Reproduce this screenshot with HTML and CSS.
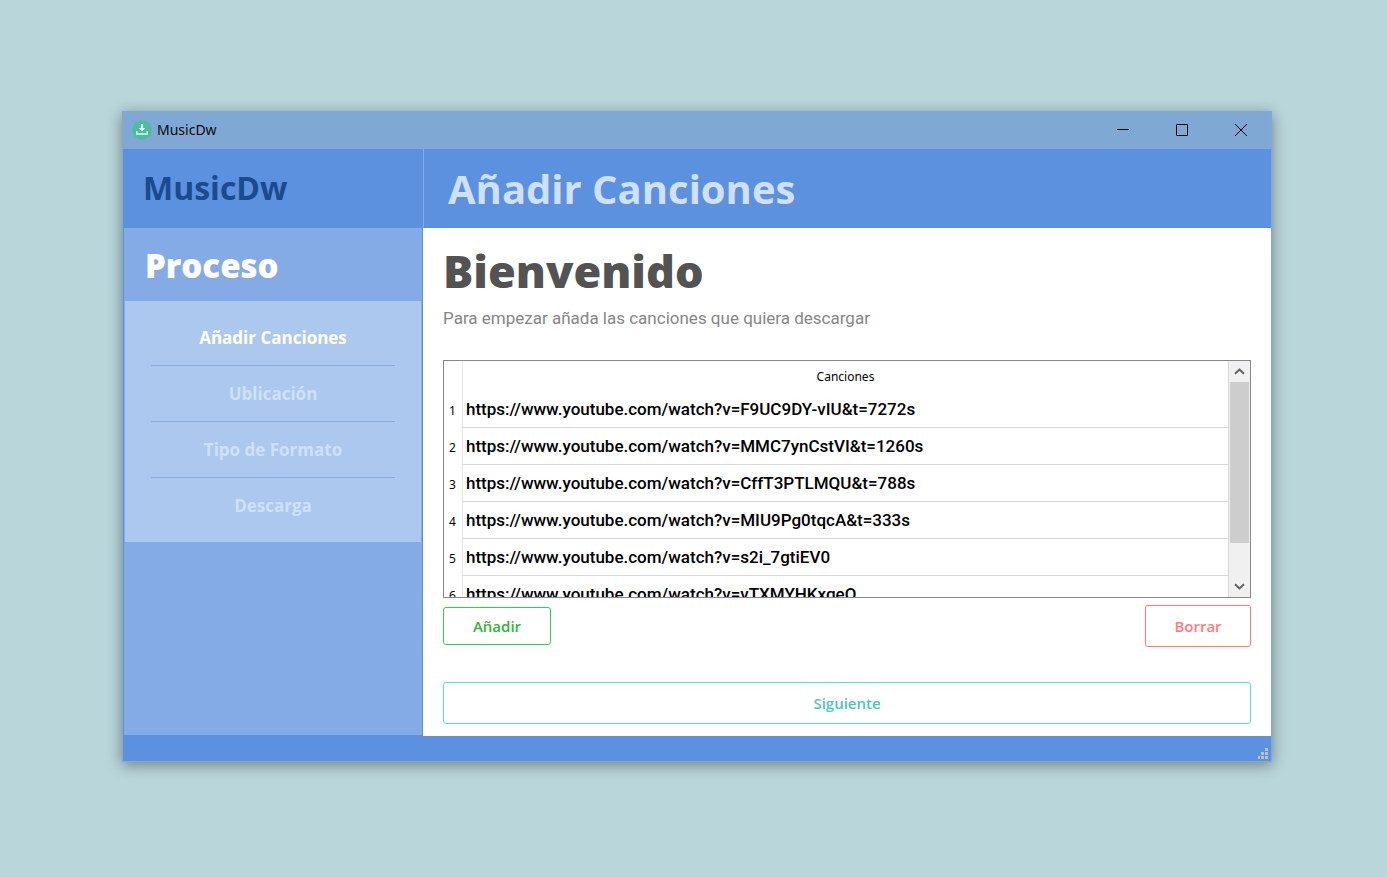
FILE: index.html
```html
<!DOCTYPE html>
<html lang="es">
<head>
<meta charset="utf-8">
<title>MusicDw</title>
<link rel="stylesheet" href="styles.css">
</head>
<body>
<div class="window">
  <div class="titlebar">
    <svg class="app-icon" viewBox="0 0 20 20" aria-hidden="true">
      <circle cx="10" cy="10" r="9.7" fill="#4bbf9c"/>
      <path d="M10 4v6" stroke="#fff" stroke-width="1.8"/>
      <path d="M6.8 8h6.4L10 11.4z" fill="#fff"/>
      <path d="M4.8 11v3h10.4v-3" fill="none" stroke="#e6f6f0" stroke-width="1.4"/>
    </svg>
    <span class="window-title">MusicDw</span>
    <div class="window-controls">
      <button type="button" aria-label="Minimizar"><svg viewBox="0 0 12 12"><path d="M0 5.5h12"/></svg></button>
      <button type="button" aria-label="Maximizar"><svg viewBox="0 0 12 12"><path d="M.5 .5h11v11H.5z"/></svg></button>
      <button type="button" aria-label="Cerrar"><svg viewBox="0 0 12 12"><path d="M0 0l12 12M12 0L0 12"/></svg></button>
    </div>
  </div>
  <header class="header">
    <div class="brand">MusicDw</div>
    <div class="page-title">Añadir Canciones</div>
  </header>
  <div class="body">
    <aside class="sidebar">
      <h2 class="sidebar-title">Proceso</h2>
      <ol class="steps">
        <li class="step step-active">Añadir Canciones</li>
        <li class="step">Ublicación</li>
        <li class="step">Tipo de Formato</li>
        <li class="step">Descarga</li>
      </ol>
    </aside>
    <main class="content">
      <h1 class="welcome">Bienvenido</h1>
      <p class="hint">Para empezar añada las canciones que quiera descargar</p>
      <div class="list">
        <div class="list-view">
          <table class="songs">
            <thead><tr><th class="num"></th><th class="col">Canciones</th></tr></thead>
            <tbody>
              <tr><th class="num">1</th><td>https://www.youtube.com/watch?v=F9UC9DY-vIU&amp;t=7272s</td></tr>
              <tr><th class="num">2</th><td>https://www.youtube.com/watch?v=MMC7ynCstVI&amp;t=1260s</td></tr>
              <tr><th class="num">3</th><td>https://www.youtube.com/watch?v=CffT3PTLMQU&amp;t=788s</td></tr>
              <tr><th class="num">4</th><td>https://www.youtube.com/watch?v=MIU9Pg0tqcA&amp;t=333s</td></tr>
              <tr><th class="num">5</th><td>https://www.youtube.com/watch?v=s2i_7gtiEV0</td></tr>
              <tr><th class="num">6</th><td>https://www.youtube.com/watch?v=vTXMYHKxgeQ</td></tr>
            </tbody>
          </table>
        </div>
        <div class="scrollbar">
          <button type="button" class="scroll-button" aria-label="Subir"><svg viewBox="0 0 11 7"><path d="M1 5.7l4.5-4.2L10 5.7"/></svg></button>
          <div class="track"><div class="thumb"></div></div>
          <button type="button" class="scroll-button" aria-label="Bajar"><svg viewBox="0 0 11 7"><path d="M1 1.3l4.5 4.2L10 1.3"/></svg></button>
        </div>
      </div>
      <div class="actions">
        <button type="button" class="button button-add">Añadir</button>
        <button type="button" class="button button-delete">Borrar</button>
      </div>
      <button type="button" class="button button-next">Siguiente</button>
    </main>
  </div>
  <footer class="statusbar">
    <svg class="grip" viewBox="0 0 10 11" aria-hidden="true"><path d="M7 0h3v3H7zM3 4h3v3H3zM7 4h3v3H7zM0 8h2v3H0zM3 8h3v3H3zM7 8h3v3H7z"/></svg>
  </footer>
</div>
</body>
</html>
```
FILE: styles.css
```css
* {
  box-sizing: border-box;
}

body {
  margin: 0;
  min-height: 100vh;
  display: flex;
  padding: 111px 115px 115px 122px;
  background: #b9d6da;
  font-family: "Open Sans", sans-serif;
}

button {
  font: inherit;
  padding: 0;
  border: 0;
  background: none;
}

.window {
  flex: 1;
  display: flex;
  flex-direction: column;
  border: 1px solid #80a8d8;
  background: #fff;
  box-shadow: 0 3px 14px rgba(0, 0, 0, 0.4);
}

.titlebar {
  display: flex;
  align-items: center;
  height: 37px;
  padding: 0 1px 1px 9px;
  background: #80a8d5;
}

.app-icon {
  width: 20px;
  height: 20px;
}

.window-title {
  margin-left: 5px;
  font-family: "Noto Sans", sans-serif;
  font-size: 14px;
  line-height: 22px;
  color: #0a0a0a;
}

.window-controls {
  display: flex;
  align-self: stretch;
  margin-left: auto;
}

.window-controls button {
  display: flex;
  align-items: center;
  justify-content: center;
  width: 59px;
}

.window-controls svg {
  width: 12px;
  height: 12px;
  fill: none;
  stroke: #000;
  stroke-width: 1;
}

.header {
  display: flex;
  height: 79px;
  background: #5c91df;
  font-weight: 700;
}

.brand {
  width: 301px;
  padding-left: 20px;
  border-right: 1px solid #84abe6;
  font-size: 32px;
  line-height: 78px;
  color: #1c4a8e;
}

.page-title {
  padding-left: 24px;
  font-size: 40px;
  line-height: 80px;
  color: #cfe0f8;
}

.body {
  flex: 1;
  display: flex;
}

.sidebar {
  width: 300px;
  border: solid #5c91df;
  border-width: 0 1px 1px;
  background: #84abe6;
}

.sidebar-title {
  margin: 0;
  padding: 2px 0 0 21px;
  font-size: 33px;
  font-weight: 800;
  line-height: 71px;
  color: #fff;
}

.steps {
  margin: 0 1px;
  padding: 9px 26px;
  list-style: none;
  background: #acc8ef;
}

.step {
  height: 56px;
  border-bottom: 1px solid #84abe6;
  font-size: 17px;
  font-weight: 700;
  line-height: 56px;
  text-align: center;
  color: #d0e0f7;
}

.step:last-child {
  height: 55px;
  border-bottom: 0;
}

.step-active {
  color: #fff;
}

.content {
  flex: 1;
  display: flex;
  flex-direction: column;
  padding: 10px 20px 12px;
}

.welcome {
  margin: 0;
  font-size: 45px;
  font-weight: 800;
  line-height: 66px;
  color: #535353;
}

.hint {
  margin: 2px 0 29px;
  font-family: Roboto, sans-serif;
  font-size: 17px;
  line-height: 25px;
  color: #868686;
}

.list {
  flex: 1 1 0;
  min-height: 0;
  display: flex;
  border: 1px solid #828790;
}

.list-view {
  flex: 1;
  height: 0;
  min-height: 100%;
  overflow: hidden;
  border-right: 1px solid #d8d8d8;
}

.songs {
  width: 100%;
  border-collapse: separate;
  border-spacing: 0;
  color: #000;
}

.songs th {
  padding: 0;
  font-family: "Noto Sans", sans-serif;
  font-size: 12px;
  font-weight: 400;
}

.songs .num {
  width: 19px;
  padding: 2px 1px 0 0;
  border-right: 1px solid #e5e5e5;
}

.songs .col {
  height: 30px;
}

.songs td {
  height: 37px;
  padding: 0 3px;
  border-bottom: 1px solid #d8d8d8;
  font-family: Roboto, sans-serif;
  font-size: 17px;
  font-weight: 500;
}

.scrollbar {
  display: flex;
  flex-direction: column;
  width: 21px;
  padding: 0 1px;
  background: #f0f0f0;
}

.scroll-button {
  display: flex;
  align-items: center;
  justify-content: center;
  height: 21px;
}

.scroll-button svg {
  width: 11px;
  height: 7px;
  fill: none;
  stroke: #606060;
  stroke-width: 2;
}

.track {
  flex: 1;
}

.thumb {
  height: 83%;
  background: #cdcdcd;
}

.actions {
  display: flex;
  align-items: center;
  justify-content: space-between;
  margin: 7px 0 35px;
}

.button {
  height: 42px;
  border: 1px solid;
  border-radius: 3px;
  font-size: 15px;
  font-weight: 600;
}

.button-add {
  width: 108px;
  height: 38px;
  border-color: #35cc55;
  color: #37b33b;
}

.button-delete {
  width: 106px;
  border-color: #ff7871;
  color: #ff7d80;
}

.button-next {
  border-color: #58e0cd;
  color: #4ec6b6;
}

.statusbar {
  display: flex;
  align-items: flex-end;
  justify-content: flex-end;
  height: 25px;
  padding: 2px 3px;
  background: #5c91df;
}

.grip {
  width: 10px;
  height: 11px;
  fill: #bfbfbf;
}
```
